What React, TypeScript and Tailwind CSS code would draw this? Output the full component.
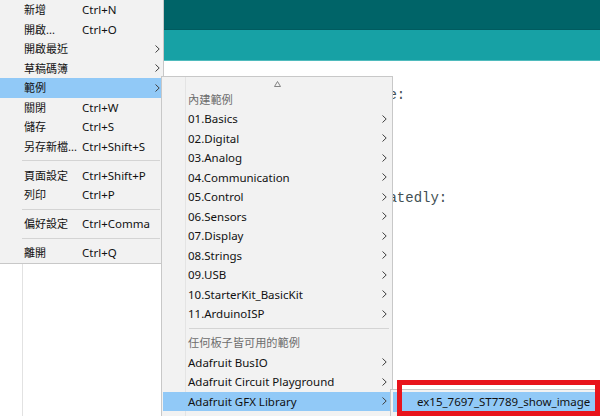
import React from "react";

const font = { fontFamily: '"Noto Sans", "Noto Sans CJK TC", sans-serif' };

type Row =
  | { kind: "item"; label: string; shortcut?: string; sub?: boolean; active?: boolean }
  | { kind: "sep" }
  | { kind: "header"; label: string };

const fileMenu: Row[] = [
  { kind: "item", label: "新增", shortcut: "Ctrl+N" },
  { kind: "item", label: "開啟...", shortcut: "Ctrl+O" },
  { kind: "item", label: "開啟最近", sub: true },
  { kind: "item", label: "草稿碼簿", sub: true },
  { kind: "item", label: "範例", sub: true, active: true },
  { kind: "item", label: "關閉", shortcut: "Ctrl+W" },
  { kind: "item", label: "儲存", shortcut: "Ctrl+S" },
  { kind: "item", label: "另存新檔...", shortcut: "Ctrl+Shift+S" },
  { kind: "sep" },
  { kind: "item", label: "頁面設定", shortcut: "Ctrl+Shift+P" },
  { kind: "item", label: "列印", shortcut: "Ctrl+P" },
  { kind: "sep" },
  { kind: "item", label: "偏好設定", shortcut: "Ctrl+Comma" },
  { kind: "sep" },
  { kind: "item", label: "離開", shortcut: "Ctrl+Q" },
];

const examples: Row[] = [
  { kind: "header", label: "內建範例" },
  { kind: "item", label: "01.Basics", sub: true },
  { kind: "item", label: "02.Digital", sub: true },
  { kind: "item", label: "03.Analog", sub: true },
  { kind: "item", label: "04.Communication", sub: true },
  { kind: "item", label: "05.Control", sub: true },
  { kind: "item", label: "06.Sensors", sub: true },
  { kind: "item", label: "07.Display", sub: true },
  { kind: "item", label: "08.Strings", sub: true },
  { kind: "item", label: "09.USB", sub: true },
  { kind: "item", label: "10.StarterKit_BasicKit", sub: true },
  { kind: "item", label: "11.ArduinoISP", sub: true },
  { kind: "sep" },
  { kind: "header", label: "任何板子皆可用的範例" },
  { kind: "item", label: "Adafruit BusIO", sub: true },
  { kind: "item", label: "Adafruit Circuit Playground", sub: true },
  { kind: "item", label: "Adafruit GFX Library", sub: true, active: true },
];

const code = [
  "void setup() {",
  "  // put your setup code here, to run once:",
  "",
  "}",
  "",
  "void loop() {",
  "  // put your main code here, to run repeatedly:",
  "",
  "}",
];

function Chevron() {
  return (
    <svg width="5" height="8" viewBox="0 0 5 8" className="shrink-0">
      <path d="M0.5 0.5 L4.2 4 L0.5 7.5" fill="none" stroke="#404040" strokeWidth="1" />
    </svg>
  );
}

export default function App() {
  return (
    <div className="relative w-[600px] h-[416px] overflow-hidden bg-white" style={font}>
      <div className="h-[30px] bg-[#006468] border-b border-[#005b5f]" />
      <div className="h-[31px] bg-[#17a1a5] border-b border-[#4fbbbd]" />
      <div className="flex h-[355px]">
        <div className="w-[23px] border-r border-[#e2e2e2]" />
        <pre
          className="pl-[21px] pt-[3px] text-[14px] leading-[20.6px] text-[#434f54]"
          style={{ fontFamily: '"Liberation Mono", monospace' }}
        >
          {code.join("\n")}
        </pre>
      </div>

      {/* 檔案 menu */}
      <div className="absolute left-0 top-0 w-[164px] bg-[#f2f2f2] border-r border-b border-[#c8c8c8] text-[11.5px] leading-none text-[#111]">
        {fileMenu.map((r, i) =>
          r.kind === "sep" ? (
            <div key={i} className="h-[9.5px] flex items-center pl-[22px] pr-[3px]">
              <div className="h-px w-full bg-[#d4d4d4]" />
            </div>
          ) : r.kind === "item" ? (
            <div
              key={i}
              className={`h-[19.5px] flex items-center pl-[24px] pr-[3px] ${r.active ? "bg-[#91c9f7]" : ""}`}
            >
              <span className="w-[58px] whitespace-nowrap text-[11px]">{r.label}</span>
              <span className="flex-1 whitespace-nowrap">{r.shortcut}</span>
              {r.sub && <Chevron />}
            </div>
          ) : null
        )}
      </div>

      {/* 範例 submenu */}
      <div className="absolute left-[161px] top-[76px] w-[232px] h-[360px] bg-[#f2f2f2] border border-[#c8c8c8] p-px text-[11.5px] leading-none text-[#111]">
        <div className="absolute left-[23px] top-0 bottom-0 w-px bg-[#e4e4e4]" />
        <div className="relative h-[11.5px] flex items-center justify-center">
          <svg width="7" height="6" viewBox="0 0 7 6" className="ml-[1px]">
            <path d="M3.5 0.5 L6.5 5.5 L0.5 5.5 Z" fill="none" stroke="#777" strokeWidth="0.9" />
          </svg>
        </div>
        {examples.map((r, i) =>
          r.kind === "sep" ? (
            <div key={i} className="relative h-[9.5px] flex items-center pl-[26px] pr-[2px]">
              <div className="h-px w-full bg-[#d4d4d4]" />
            </div>
          ) : r.kind === "header" ? (
            <div key={i} className="relative h-[19.5px] flex items-center pl-[25px] text-[11.2px] text-[#6d6d6d]">
              {r.label}
            </div>
          ) : (
            <div
              key={i}
              className={`relative h-[19.5px] flex items-center pl-[25px] pr-[4px] ${r.active ? "bg-[#91c9f7]" : ""}`}
            >
              <span className="flex-1 whitespace-nowrap">{r.label}</span>
              {r.sub && <Chevron />}
            </div>
          )
        )}
      </div>

      {/* Adafruit GFX Library submenu */}
      <div className="absolute left-[390px] top-[389px] w-[215px] h-[40px] bg-[#f2f2f2] border border-[#c8c8c8] p-[2px] text-[11.5px] leading-none text-[#111]">
        <div className="h-[20px] flex items-center pl-[24px] bg-[#91c9f7] whitespace-nowrap">
          ex15_7697_ST7789_show_image
        </div>
      </div>

      <div className="absolute left-[397px] top-[380px] w-[203px] h-[36px] border-[5px] border-[#e8141c]" />
    </div>
  );
}
